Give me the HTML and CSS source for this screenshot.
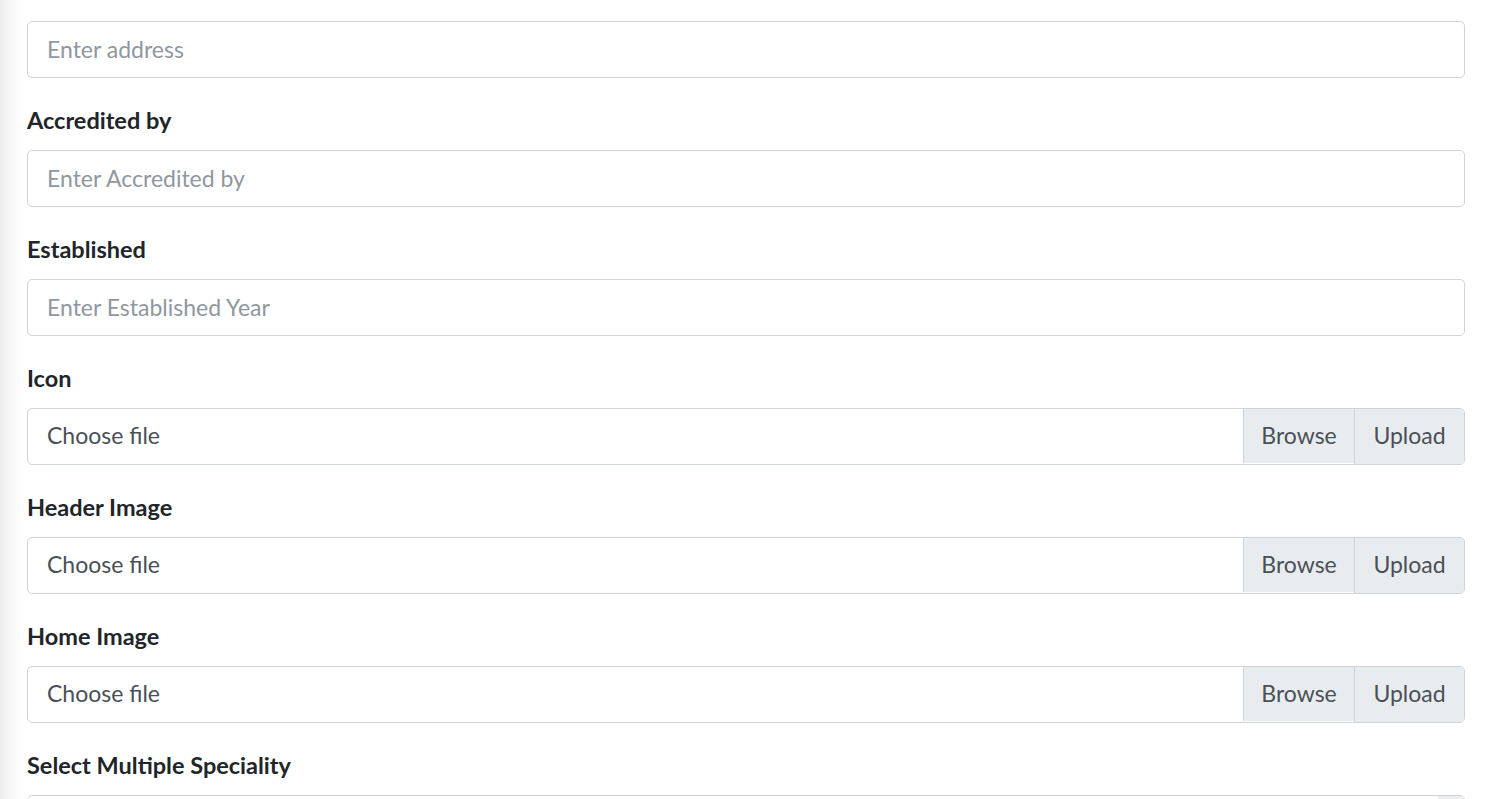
FILE: index.html
```html
<!DOCTYPE html>
<html lang="en">
<head>
    <meta charset="UTF-8">
    <meta name="viewport" content="width=device-width, initial-scale=1.0">
    <title>Hospital form</title>
    <link rel="stylesheet" href="styles.css">
</head>
<body>
    <div class="page">
        <form class="form">
            <div class="group">
                <input class="control" type="text" placeholder="Enter address">
            </div>
            <div class="group">
                <label class="label">Accredited by</label>
                <input class="control" type="text" placeholder="Enter Accredited by">
            </div>
            <div class="group">
                <label class="label">Established</label>
                <input class="control" type="text" placeholder="Enter Established Year">
            </div>
            <div class="group">
                <label class="label">Icon</label>
                <div class="file">
                    <span class="file-name">Choose file</span>
                    <span class="file-btn">Browse</span>
                    <span class="file-btn upload">Upload</span>
                </div>
            </div>
            <div class="group">
                <label class="label">Header Image</label>
                <div class="file">
                    <span class="file-name">Choose file</span>
                    <span class="file-btn">Browse</span>
                    <span class="file-btn upload">Upload</span>
                </div>
            </div>
            <div class="group">
                <label class="label">Home Image</label>
                <div class="file">
                    <span class="file-name">Choose file</span>
                    <span class="file-btn">Browse</span>
                    <span class="file-btn upload">Upload</span>
                </div>
            </div>
            <div class="group">
                <label class="label">Select Multiple Speciality</label>
                <div class="select"><span class="select-arrow"></span></div>
            </div>
        </form>
    </div>
</body>
</html>
```

FILE: styles.css
```css
* {
    margin: 0;
    padding: 0;
    box-sizing: border-box;
}
html, body {
    height: 100%;
    overflow: hidden;
}
body {
    font-family: Lato, "Liberation Sans", sans-serif;
    color: #212529;
    background: linear-gradient(to right, #ececec 0, #f7f7f7 10px, #fff 26px) no-repeat;
    background-color: #fff;
}
.page {
    padding: 21px 28px 0 27px;
}
.form {
    display: flex;
    flex-direction: column;
    gap: 27px;
}
.group {
    display: flex;
    flex-direction: column;
}
.label {
    font-size: 23.5px;
    font-weight: bold;
    line-height: 30px;
    margin-bottom: 15px;
    color: #212529;
}
.control {
    width: 100%;
    height: 57px;
    padding: 11px 19px 13px;
    font-family: inherit;
    font-size: 23px;
    line-height: 31px;
    color: #495057;
    border: 1px solid #ced4da;
    border-radius: 5px;
    background: #fff;
    outline: none;
}
.control::placeholder {
    color: #8f979f;
}
.file {
    display: flex;
    height: 57px;
    border: 1px solid #ced4da;
    border-radius: 5px;
    overflow: hidden;
    font-size: 23px;
    color: #495057;
}
.file-name {
    flex: 1;
    padding: 0 19px;
    line-height: 53px;
}
.file-btn {
    width: 111px;
    text-align: center;
    line-height: 53px;
    height: 54px;
    background: #e9ecef;
    border-left: 1px solid #ced4da;
}
.file-btn.upload {
    width: 110px;
    height: 55px;
}
.select {
    position: relative;
    height: 57px;
    border: 1px solid #ced4da;
    border-radius: 5px;
    background: #fff;
}
.select-arrow {
    position: absolute;
    right: 0;
    top: 0;
    width: 26px;
    height: 4px;
    background: #eceef0;
}
```
